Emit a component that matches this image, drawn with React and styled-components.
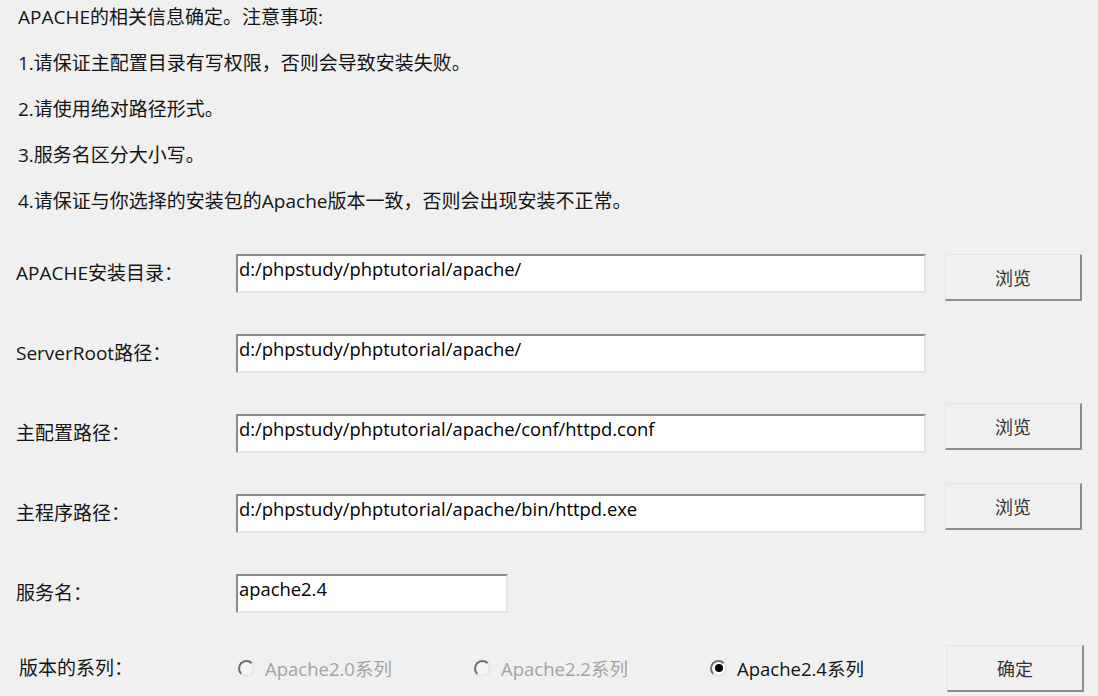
import React from 'react'
import styled, { createGlobalStyle } from 'styled-components'

const GlobalStyle = createGlobalStyle`
  body {
    margin: 0;
    background: #f0f0f0;
    font-family: "Open Sans", "Noto Sans CJK SC", sans-serif;
    color: #141414;
  }
`

const Page = styled.div`
  width: 1098px;
  height: 696px;
  overflow: hidden;
  box-sizing: border-box;
  padding: 4px 0 0 0;
`

const Notes = styled.div`
  display: flex;
  flex-direction: column;
  gap: 20px;
  padding-left: 18px;
`

const Note = styled.div`
  font-size: 19px;
  line-height: 26px;
  white-space: nowrap;
`

const Form = styled.div`
  display: flex;
  flex-direction: column;
  margin-top: 40px;
`

const Row = styled.div`
  display: grid;
  grid-template-columns: 220px 690px 156px;
  align-items: start;
  height: 80px;
  padding-left: 16px;
`

const Label = styled.div`
  font-size: 19px;
  line-height: 39px;
  padding-left: ${p => p.indent || 0}px;
  white-space: nowrap;
`

const Field = styled.div`
  box-sizing: border-box;
  width: ${p => p.width || 690}px;
  height: 39px;
  background: #fff;
  border-top: 2px solid #8a8a8a;
  border-left: 2px solid #8a8a8a;
  border-bottom: 2px solid #e6e6e6;
  border-right: 2px solid #e6e6e6;
  font-size: 18.4px;
  line-height: 26px;
  padding-left: 1px;
  color: #000;
  white-space: nowrap;
`

const Button = styled.div`
  box-sizing: border-box;
  width: 137px;
  height: 47px;
  margin-left: ${p => p.shift || 19}px;
  margin-top: ${p => p.lift ? -11 : 0}px;
  background: #f0f0f0;
  border-top: 1px solid #e4e4e4;
  border-left: 1px solid #e4e4e4;
  border-right: 2px solid #8c8c8c;
  border-bottom: 2px solid #8c8c8c;
  display: flex;
  align-items: center;
  justify-content: center;
  font-family: "Noto Sans CJK SC", sans-serif;
  font-size: 18px;
  color: #333;
`

const Radios = styled.div`
  display: flex;
  align-items: center;
  height: 39px;
  padding-left: 2px;
`

const Radio = styled.div`
  display: flex;
  align-items: center;
  gap: 10px;
  width: ${p => p.width}px;
  font-size: 18.5px;
  color: ${p => p.disabled ? '#a3a3a3' : '#141414'};
  white-space: nowrap;
`

const Dot = styled.span`
  box-sizing: border-box;
  flex: none;
  width: 17px;
  height: 17px;
  border-radius: 50%;
  background: ${p => p.disabled ? '#f4f4f4' : '#fff'};
  border: 2px solid;
  border-color: #707070 #e6e6e6 #e6e6e6 #707070;
  display: flex;
  align-items: center;
  justify-content: center;
  &::after {
    content: '';
    width: 8px;
    height: 8px;
    border-radius: 50%;
    background: ${p => p.checked ? '#000' : 'transparent'};
  }
`

const Bottom = styled(Row)`
  align-items: center;
  height: 56px;
  margin-top: -14px;
`

const notes = [
  'APACHE的相关信息确定。注意事项:',
  '1.请保证主配置目录有写权限，否则会导致安装失败。',
  '2.请使用绝对路径形式。',
  '3.服务名区分大小写。',
  '4.请保证与你选择的安装包的Apache版本一致，否则会出现安装不正常。',
]

const fields = [
  { label: 'APACHE安装目录：', value: 'd:/phpstudy/phptutorial/apache/', browse: true },
  { label: 'ServerRoot路径：', value: 'd:/phpstudy/phptutorial/apache/' },
  { label: '主配置路径：', value: 'd:/phpstudy/phptutorial/apache/conf/httpd.conf', browse: true, lift: true },
  { label: '主程序路径：', value: 'd:/phpstudy/phptutorial/apache/bin/httpd.exe', browse: true, lift: true },
  { label: '服务名：', value: 'apache2.4', width: 272 },
]

const App = () => (
  <Page>
    <GlobalStyle />
    <Notes>
      {notes.map(n => <Note key={n}>{n}</Note>)}
    </Notes>

    <Form>
      {fields.map(f => (
        <Row key={f.label}>
          <Label>{f.label}</Label>
          <Field width={f.width}>{f.value}</Field>
          {f.browse ? <Button lift={f.lift}>浏览</Button> : <span />}
        </Row>
      ))}

      <Bottom>
        <Label indent={3}>版本的系列：</Label>
        <Radios>
          <Radio width={236} disabled><Dot disabled />Apache2.0系列</Radio>
          <Radio width={236} disabled><Dot disabled />Apache2.2系列</Radio>
          <Radio width={200}><Dot checked />Apache2.4系列</Radio>
        </Radios>
        <Button shift={21}>确定</Button>
      </Bottom>
    </Form>
  </Page>
)

export default App
